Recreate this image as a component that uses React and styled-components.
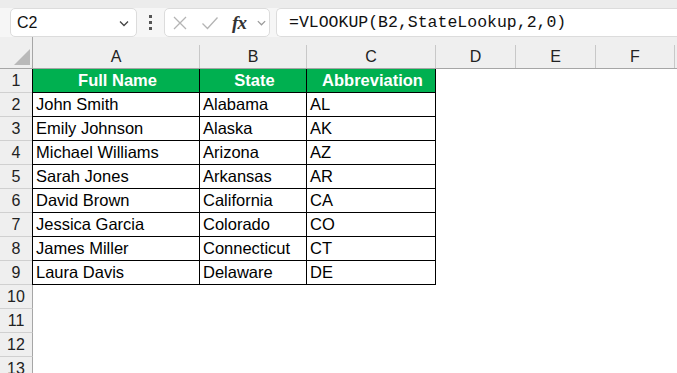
import React from "react";
import styled, { createGlobalStyle } from "styled-components";

const GlobalStyle = createGlobalStyle`
  html, body {
    margin: 0;
    padding: 0;
    background: #ffffff;
    overflow: hidden;
  }
  body {
    font-family: "Liberation Sans", Arial, sans-serif;
    color: #000;
  }
`;

const COLS = [
  { key: "A", width: 167 },
  { key: "B", width: 107 },
  { key: "C", width: 129 },
  { key: "D", width: 80 },
  { key: "E", width: 80 },
  { key: "F", width: 79 },
  { key: "G", width: 80 },
];

const DATA = [
  ["John Smith", "Alabama", "AL"],
  ["Emily Johnson", "Alaska", "AK"],
  ["Michael Williams", "Arizona", "AZ"],
  ["Sarah Jones", "Arkansas", "AR"],
  ["David Brown", "California", "CA"],
  ["Jessica Garcia", "Colorado", "CO"],
  ["James Miller", "Connecticut", "CT"],
  ["Laura Davis", "Delaware", "DE"],
];

const Page = styled.div`
  width: 677px;
  height: 373px;
  overflow: hidden;
  background: #ffffff;
`;

const TopStrip = styled.div`
  height: 8px;
  background: #ececec;
`;

const Toolbar = styled.div`
  height: 29px;
  display: flex;
  align-items: stretch;
  background: #f6f6f6;
  padding-left: 10px;
`;

const Box = styled.div`
  display: flex;
  align-items: center;
  box-sizing: border-box;
  background: #ffffff;
  border: 1px solid #dcdcdc;
  border-radius: 5px;
  width: ${(p) => p.$w || "auto"};
  flex: ${(p) => (p.$grow ? 1 : "none")};
  margin-right: ${(p) => p.$mr || "0"};
`;

const FormulaBox = styled(Box)`
  border-right: none;
  border-radius: 5px 0 0 5px;
`;

const NameText = styled.span`
  flex: 1;
  padding-left: 6px;
  font-size: 16px;
  color: #111;
`;

const Dots = styled.div`
  width: 27px;
  display: flex;
  flex-direction: column;
  align-items: center;
  justify-content: center;
  gap: 3px;
  span {
    width: 3px;
    height: 3px;
    background: #555;
  }
`;

const IconSlot = styled.div`
  width: ${(p) => p.$w}px;
  display: flex;
  align-items: center;
  justify-content: center;
`;

const Fx = styled.span`
  font-family: "Liberation Serif", "Times New Roman", serif;
  font-style: italic;
  font-weight: bold;
  font-size: 19px;
  color: #333;
  letter-spacing: -1px;
`;

const FormulaText = styled.span`
  padding-left: 12px;
  font-family: "Liberation Mono", "Courier New", monospace;
  font-size: 16.5px;
  color: #111;
  white-space: nowrap;
`;

const Sheet = styled.div`
  display: grid;
  grid-template-columns: 33px ${COLS.map((c) => c.width + "px").join(" ")};
  grid-template-rows: 32px;
  grid-auto-rows: 24px;
`;

const SheetRow = styled.div`
  display: contents;
`;

const Corner = styled.div`
  background: #efefef;
  border-bottom: 1px solid #a6a6a6;
  border-right: 1px solid #a6a6a6;
  box-sizing: border-box;
  display: flex;
  align-items: flex-end;
  justify-content: flex-end;
  padding: 0 2px 3px 0;
`;

const ColHead = styled.div`
  box-sizing: border-box;
  background: #efefef;
  border-bottom: 1px solid #a6a6a6;
  display: flex;
  align-items: flex-end;
`;

const ColLabel = styled.div`
  flex: 1;
  height: 23px;
  box-sizing: border-box;
  border-right: 1px solid #c8c8c8;
  display: flex;
  align-items: center;
  justify-content: center;
  font-size: 16px;
  color: #222;
`;

const RowHead = styled.div`
  box-sizing: border-box;
  background: #efefef;
  border-right: 1px solid #a6a6a6;
  border-bottom: 1px solid #d0d0d0;
  display: flex;
  align-items: center;
  justify-content: center;
  font-size: 16px;
  color: #222;
`;

const Cell = styled.div`
  box-sizing: border-box;
  display: flex;
  align-items: center;
  padding-left: 3px;
  font-size: 16.5px;
  white-space: nowrap;
  background: ${(p) => (p.$head ? "#00b050" : "#ffffff")};
  color: ${(p) => (p.$head ? "#ffffff" : "#000000")};
  font-weight: ${(p) => (p.$head ? "bold" : "normal")};
  justify-content: ${(p) => (p.$head ? "center" : "flex-start")};
  border-right: ${(p) => (p.$table ? "1px solid #000" : "none")};
  border-bottom: ${(p) => (p.$table ? "1px solid #000" : "none")};
  border-left: ${(p) => (p.$first ? "1px solid #000" : "none")};
  margin-left: ${(p) => (p.$first ? "-1px" : "0")};
`;

const Chevron = ({ color = "#444", size = 12 }) => (
  <svg width={size} height={size} viewBox="0 0 12 12">
    <path d="M2 4.5 L6 8.5 L10 4.5" fill="none" stroke={color} strokeWidth="1.3" />
  </svg>
);

const Cross = () => (
  <svg width="16" height="16" viewBox="0 0 16 16">
    <path d="M2 2 L14 14 M14 2 L2 14" stroke="#b4b4b4" strokeWidth="1.3" fill="none" />
  </svg>
);

const Check = () => (
  <svg width="18" height="16" viewBox="0 0 18 16">
    <path d="M1.5 8.5 L6.5 13.5 L16.5 2.5" stroke="#b4b4b4" strokeWidth="1.3" fill="none" />
  </svg>
);

const Triangle = () => (
  <svg width="16" height="16" viewBox="0 0 16 16">
    <path d="M16 0 L16 16 L0 16 Z" fill="#b9b9b9" />
  </svg>
);

const tableRows = [["Full Name", "State", "Abbreviation"], ...DATA];

export default function App() {
  const rows = [];
  for (let r = 1; r <= 13; r++) {
    const values = tableRows[r - 1];
    rows.push(
      <SheetRow key={r}>
        <RowHead>{r}</RowHead>
        {COLS.map((c, i) => {
          const inTable = values && i < 3;
          return (
            <Cell
              key={c.key}
              $table={inTable}
              $first={inTable && i === 0}
              $head={inTable && r === 1}
            >
              {inTable ? values[i] : ""}
            </Cell>
          );
        })}
      </SheetRow>
    );
  }

  return (
    <Page>
      <GlobalStyle />
      <TopStrip />
      <Toolbar>
        <Box $w="127px">
          <NameText>C2</NameText>
          <IconSlot $w={24}>
            <Chevron />
          </IconSlot>
        </Box>
        <Dots>
          <span />
          <span />
          <span />
        </Dots>
        <Box $w="106px" $mr="6px">
          <IconSlot $w={30}>
            <Cross />
          </IconSlot>
          <IconSlot $w={29}>
            <Check />
          </IconSlot>
          <IconSlot $w={30}>
            <Fx>fx</Fx>
          </IconSlot>
          <IconSlot $w={14}>
            <Chevron color="#999" size={11} />
          </IconSlot>
        </Box>
        <FormulaBox $grow>
          <FormulaText>=VLOOKUP(B2,StateLookup,2,0)</FormulaText>
        </FormulaBox>
      </Toolbar>
      <Sheet>
        <SheetRow>
          <Corner>
            <Triangle />
          </Corner>
          {COLS.map((c) => (
            <ColHead key={c.key}>
              <ColLabel>{c.key === "G" ? "" : c.key}</ColLabel>
            </ColHead>
          ))}
        </SheetRow>
        {rows}
      </Sheet>
    </Page>
  );
}
